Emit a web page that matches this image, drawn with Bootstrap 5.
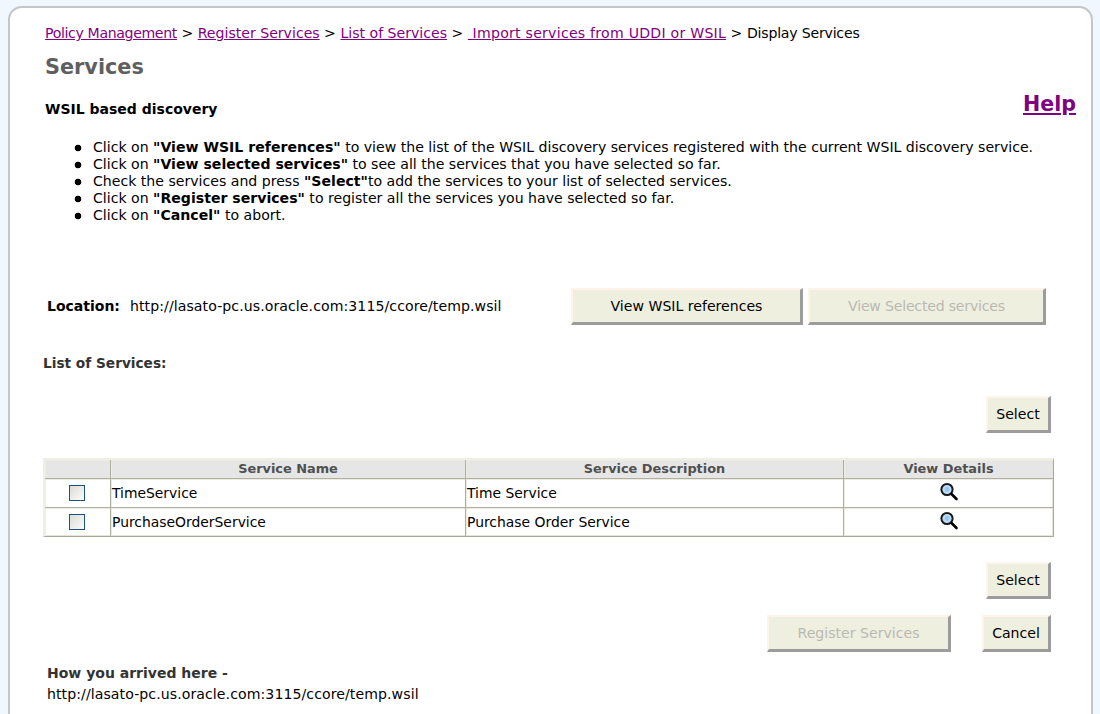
<!DOCTYPE html>
<html lang="en">
<head>
<meta charset="utf-8">
<title>Services</title>
<link href="https://cdn.jsdelivr.net/npm/bootstrap@5.3.0/dist/css/bootstrap.min.css" rel="stylesheet">
<style>
html,body{height:714px;overflow:hidden}
body{background:#f0f7ff;font-family:"DejaVu Sans",sans-serif;font-size:14.1px;line-height:17px;color:#000;padding:6px 7px 0 8px}
a{color:#800080}
.sheet{background:#fff;border:2px solid #c3c6c9;border-bottom:0;border-radius:14px 14px 0 0;height:720px;padding:16px 17px 0 35px}
.crumbs{height:19px;line-height:19px;white-space:nowrap}
.tight{letter-spacing:-.35px}
.tight-sm{letter-spacing:-.2px}
.loose{letter-spacing:.25px}
.url-text{letter-spacing:.08px}
.page-title{font-size:20.8px;line-height:26px;font-weight:700;color:#5f5f5f;margin:11px 0 0}
.head-row{height:31px;margin-top:11px}
.sub-title{font-size:14px;font-weight:700;line-height:17px;margin:10px 0 0}
.help-link{font-size:20.6px;font-weight:700;line-height:26px;margin-right:-2px}
.tips{margin:17px 0 0;padding-left:28px;white-space:nowrap;list-style:none}
.tips li{padding-left:20px;background:radial-gradient(circle 3.6px at 5px 9px,#000 90%,transparent)}
.loc-row{margin-top:64px;height:36px;padding-left:2px}
.loc-label{font-weight:700;margin-right:10px;font-size:14px}
.old-btn{background:#efefe0;border-style:solid;border-width:2px 3px 3px 2px;border-color:#fff4ec #9c9c9c #9c9c9c #fff4ec;border-radius:0;height:37px;padding:0;font-size:14.1px;color:#000;line-height:30px;display:block}
.old-btn:disabled{background:#efefe0;border-color:#fff4ec #9c9c9c #9c9c9c #fff4ec;color:#b9b9b3;opacity:1}
.list-title{font-weight:700;font-size:13.7px;color:#333;margin:30px 0 0 -2px;line-height:19px}
.svc-table{width:1011px;margin-left:-2px;border-collapse:separate;border-spacing:0;table-layout:fixed;border-style:solid;border-width:2px 1px 1px 2px;border-color:#efefe3 #a9a999 #a9a999 #efefe3}
.svc-table th,.svc-table td{border-style:solid;border-color:#b0b0a0;border-width:1px 0 0 1px;box-shadow:inset 1px 1px 0 #ecece0}
.svc-table th{border-top:0;background:#e6e6e6;color:#505050;text-align:center;font-size:12.9px;height:18px;padding:0 0 1px;line-height:16px}
.svc-table td{height:29px;padding:0 1px;font-size:13.9px}
.svc-table tr>:first-child{border-left:0}
.svc-table tr>:last-child{box-shadow:inset 1px 1px 0 #ecece0,inset -1px 0 0 #e4e4d8}
.svc-table tr:last-child td{box-shadow:inset 1px 1px 0 #ecece0,inset 0 -1px 0 #e4e4d8}
.svc-table tr:last-child td:last-child{box-shadow:inset 1px 1px 0 #ecece0,inset -1px -1px 0 #e4e4d8}
.svc-table td.mid{text-align:center}
.ck{appearance:none;display:block;margin:0 0 0 23px;width:16px;height:16px;border:1px solid #1c5180;background:linear-gradient(135deg,#dcdcd7,#fbfbf8)}
.mag{display:block;margin:-3px auto 0}
.arrived{margin:13px 0 0 2px}
.arrived-title{font-weight:700;color:#333;font-size:14px}
</style>
</head>
<body>
<div class="sheet">
  <div class="crumbs"><a class="tight" href="#">Policy Management</a> &gt; <a href="#">Register Services</a> &gt; <a href="#">List of Services</a> &gt; <a class="loose" href="#">&nbsp;Import services from UDDI or WSIL</a> &gt; <span class="tight-sm">Display Services</span></div>
  <h1 class="page-title">Services</h1>
  <div class="d-flex justify-content-between head-row">
    <h2 class="sub-title">WSIL based discovery</h2>
    <a class="help-link" href="#">Help</a>
  </div>
  <ul class="tips">
    <li>Click on <b>"View WSIL references"</b> to view the list of the WSIL discovery services registered with the current WSIL discovery service.</li>
    <li>Click on <b>"View selected services"</b> to see all the services that you have selected so far.</li>
    <li>Check the services and press <b>"Select"</b>to add the services to your list of selected services.</li>
    <li>Click on <b>"Register services"</b> to register all the services you have selected so far.</li>
    <li>Click on <b>"Cancel"</b> to abort.</li>
  </ul>
  <div class="d-flex align-items-center loc-row">
    <span class="loc-label">Location:</span><span class="url-text">http://lasato-pc.us.oracle.com:3115/ccore/temp.wsil</span>
    <button class="btn old-btn ms-auto" style="width:232px" type="button">View WSIL references</button>
    <button class="btn old-btn tight-sm" style="width:238px;margin:0 28px 0 5px" type="button" disabled>View Selected services</button>
  </div>
  <div class="list-title">List of Services:</div>
  <div class="d-flex justify-content-end" style="margin-top:23px;margin-bottom:25px">
    <button class="btn old-btn" style="width:65px;margin-right:23px" type="button">Select</button>
  </div>
  <table class="svc-table">
    <colgroup><col style="width:65px"><col style="width:355px"><col style="width:378px"><col style="width:210px"></colgroup>
    <thead><tr><th></th><th>Service Name</th><th>Service Description</th><th>View Details</th></tr></thead>
    <tbody>
      <tr><td class="mid"><input class="ck" type="checkbox" aria-label="TimeService"></td><td>TimeService</td><td>Time Service</td><td class="mid"><svg class="mag" width="20" height="19" viewBox="0 0 20 19"><circle cx="8" cy="7.5" r="5.6" fill="#bcdcf8" stroke="#1a1a1a" stroke-width="2"/><circle cx="8" cy="7.5" r="2.4" fill="#9cc6ee"/><path d="M12.5 12l5 5" stroke="#000" stroke-width="2.6" stroke-linecap="round"/></svg></td></tr>
      <tr><td class="mid"><input class="ck" type="checkbox" aria-label="PurchaseOrderService"></td><td>PurchaseOrderService</td><td>Purchase Order Service</td><td class="mid"><svg class="mag" width="20" height="19" viewBox="0 0 20 19"><circle cx="8" cy="7.5" r="5.6" fill="#bcdcf8" stroke="#1a1a1a" stroke-width="2"/><circle cx="8" cy="7.5" r="2.4" fill="#9cc6ee"/><path d="M12.5 12l5 5" stroke="#000" stroke-width="2.6" stroke-linecap="round"/></svg></td></tr>
    </tbody>
  </table>
  <div class="d-flex justify-content-end" style="margin-top:25px">
    <button class="btn old-btn" style="width:65px;margin-right:23px" type="button">Select</button>
  </div>
  <div class="d-flex justify-content-end" style="margin-top:16px">
    <button class="btn old-btn" style="width:184px;margin-right:31px" type="button" disabled>Register Services</button>
    <button class="btn old-btn" style="width:69px;margin-right:23px" type="button">Cancel</button>
  </div>
  <div class="arrived">
    <div class="arrived-title">How you arrived here -</div>
    <div class="mt-1 url-text">http://lasato-pc.us.oracle.com:3115/ccore/temp.wsil</div>
  </div>
</div>
</body>
</html>
